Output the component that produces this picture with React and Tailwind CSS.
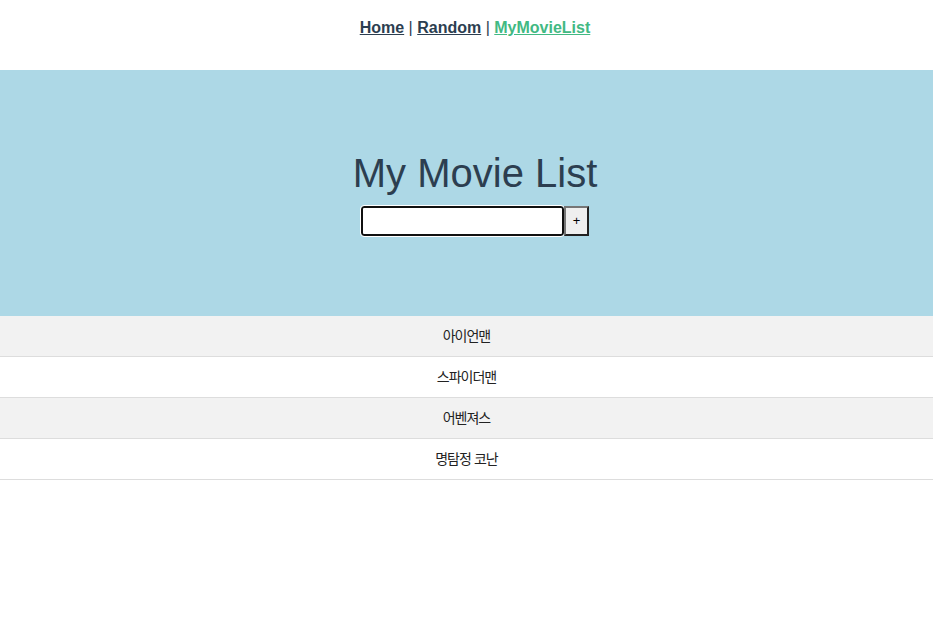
export default function App() {
  const movies = ['아이언맨', '스파이더맨', '어벤져스', '명탐정 코난'];

  return (
    <div className="min-h-screen bg-white text-[#2c3e50] text-center font-['Liberation_Sans','Noto_Sans_CJK_KR',sans-serif]">
      <nav className="h-[70px] pt-[18px] pl-[17px] text-[16px] leading-[20px]">
        <a href="#" className="font-bold underline text-[#2c3e50]">Home</a>
        <span> | </span>
        <a href="#" className="font-bold underline text-[#2c3e50]">Random</a>
        <span> | </span>
        <a href="#" className="font-bold underline text-[#42b983]">MyMovieList</a>
      </nav>

      <header className="bg-[#add8e6] pt-[80px] pb-[80px] pl-[17px]">
        <h1 className="text-[40px] leading-[46px] font-normal">My Movie List</h1>
        <div className="mt-[10px] flex justify-center items-stretch">
          <input
            className="w-[203px] h-[30px] bg-white border-2 border-[#101010] rounded-[3px] outline outline-1 outline-white"
          />
          <button className="w-[25px] h-[30px] bg-[#efefef] text-black text-[13px] border-2 border-[#767676] [border-style:outset] font-['Liberation_Sans',sans-serif]">
            +
          </button>
        </div>
      </header>

      <ul>
        {movies.map((m, i) => (
          <li
            key={m}
            className={`h-[41px] leading-[39px] border-b border-[#dddddd] text-[14px] tracking-[-1px] [word-spacing:1px] text-[#222] font-['Noto_Sans_CJK_KR',sans-serif] ${i % 2 === 0 ? 'bg-[#f2f2f2]' : 'bg-white'}`}
          >
            {m}
          </li>
        ))}
      </ul>
    </div>
  );
}
